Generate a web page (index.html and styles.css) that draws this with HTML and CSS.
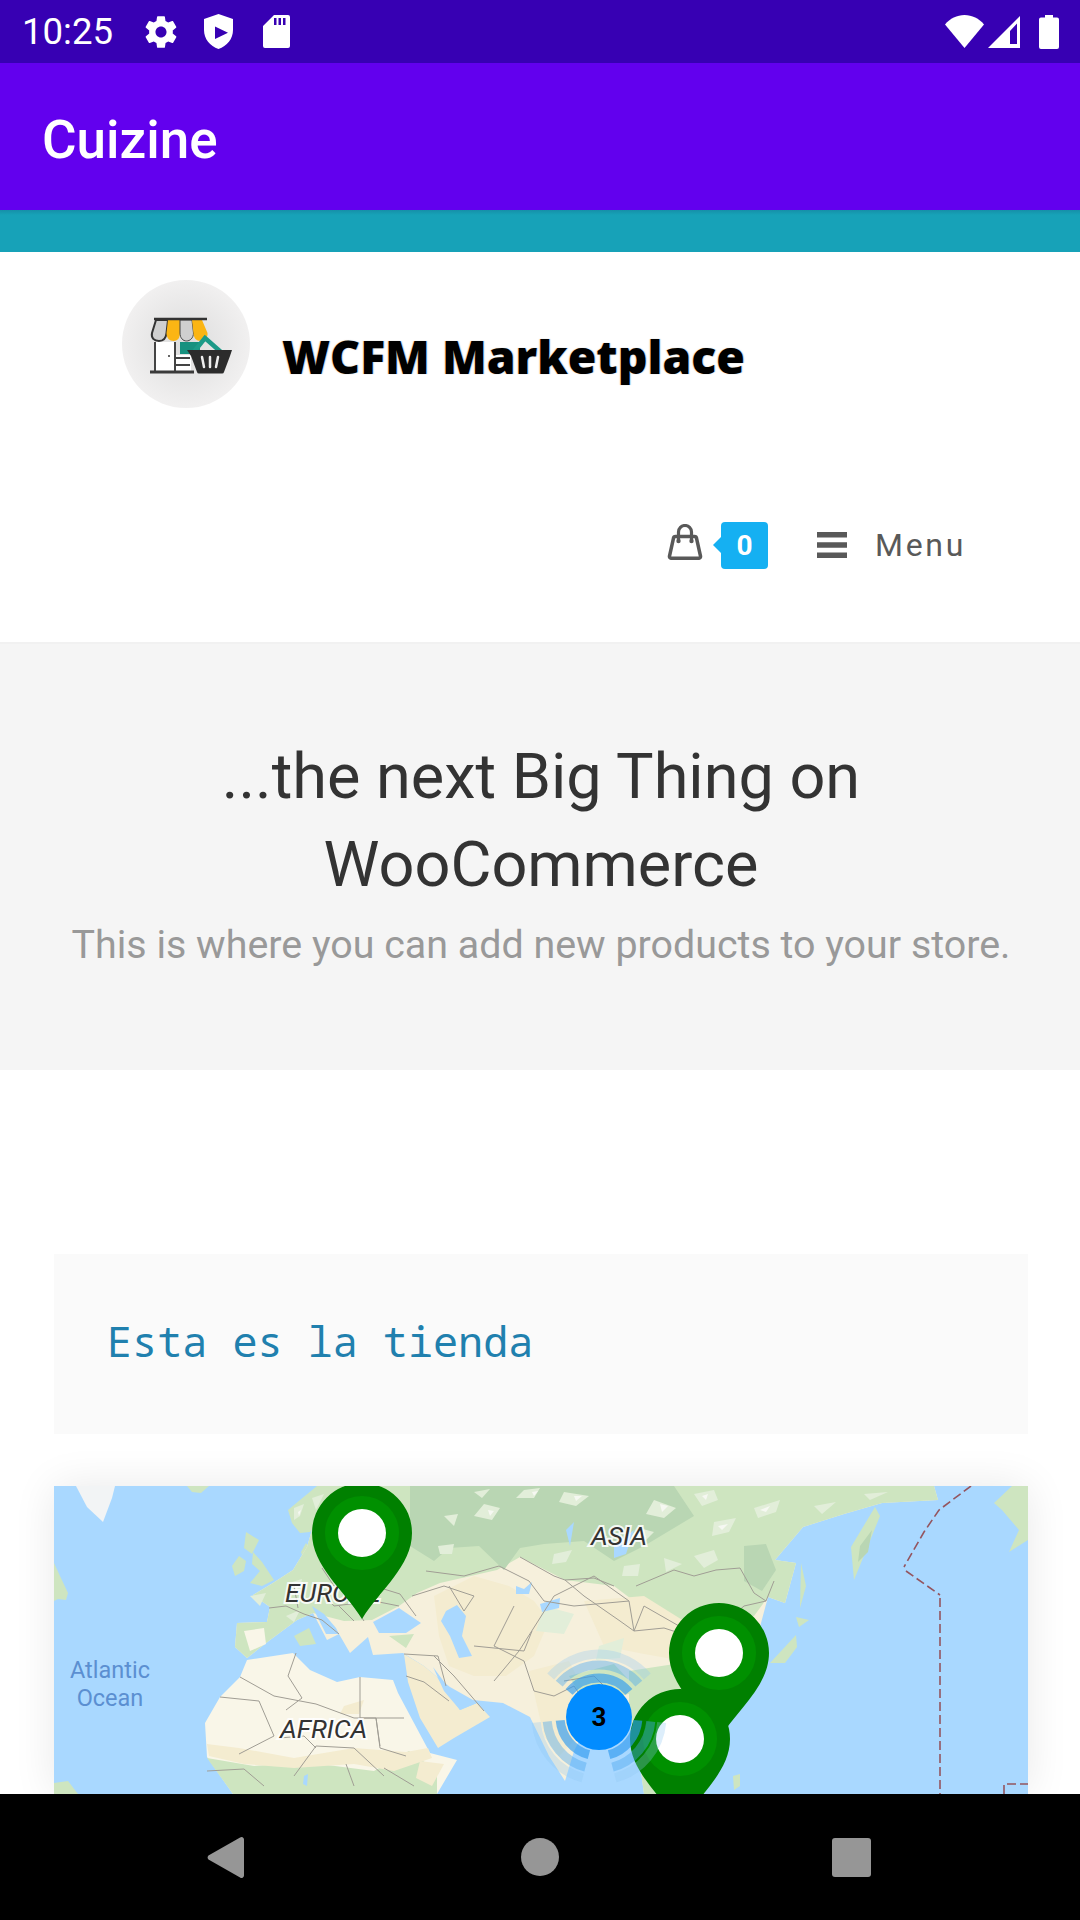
FILE: index.html
```html
<!DOCTYPE html>
<html lang="es">
<head>
<meta charset="utf-8">
<title>Cuizine</title>
<link rel="stylesheet" href="styles.css">
</head>
<body>
<div class="screen">
  <div class="status-bar">
    <span class="clock">10:25</span>
    <svg class="st-icon gear" viewBox="0 0 24 24"><path d="M19.4 13c.04-.33.07-.66.07-1s-.03-.67-.07-1l2.1-1.65c.2-.15.25-.42.12-.64l-2-3.46c-.12-.22-.39-.3-.61-.22l-2.49 1c-.52-.4-1.08-.73-1.69-.98l-.38-2.65A.49.49 0 0 0 14 2h-4c-.25 0-.46.18-.49.42l-.38 2.65c-.61.25-1.17.59-1.69.98l-2.49-1c-.23-.09-.49 0-.61.22l-2 3.46c-.13.22-.07.49.12.64L4.570 11c-.04.33-.07.67-.07 1s.03.67.07 1l-2.11 1.65c-.19.15-.24.42-.12.64l2 3.46c.12.22.39.3.61.22l2.49-1c.52.4 1.08.73 1.69.98l.38 2.65c.03.24.24.42.49.42h4c.25 0 .46-.18.49-.42l.38-2.65c.61-.25 1.17-.59 1.69-.98l2.49 1c.23.09.49 0 .61-.22l2-3.46c.12-.22.07-.49-.12-.64L19.4 13zM12 15.500c-1.93 0-3.500-1.570-3.500-3.500s1.570-3.500 3.500-3.500 3.500 1.570 3.500 3.500-1.570 3.500-3.500 3.500z"/></svg>
    <svg class="st-icon shield" viewBox="0 0 29 35"><path fill-rule="evenodd" d="M14.500 0 0 5v11c0 9 6 16 14.500 19C23 32 29 25 29 16V5L14.500 0zM11 12.500V25l13-6.200L11 12.500z"/></svg>
    <svg class="st-icon sd" viewBox="0 0 27 33"><path fill-rule="evenodd" d="M11 0h14a2 2 0 0 1 2 2v29a2 2 0 0 1-2 2H2a2 2 0 0 1-2-2V11L11 0zM11 3v7h2.500V3H11zm4.500 0v7H18V3h-2.500zm4.500 0v7h2.500V3H20z"/></svg>
    <span class="spacer"></span>
    <svg class="wifi" viewBox="0 0 39 33"><path d="M19.500 33 0 9.500C5 3.500 12 0 19.500 0S34 3.500 39 9.500L19.500 33z"/></svg>
    <svg class="signal" viewBox="0 0 32 32"><path fill-rule="evenodd" d="M32 0v32H0L32 0zM29 7.500l-7 7.500v13h7V7.500z"/></svg>
    <svg class="battery" viewBox="0 0 20 34"><path d="M6 0h8v2.500h4a2 2 0 0 1 2 2V32a2 2 0 0 1-2 2H2a2 2 0 0 1-2-2V4.500a2 2 0 0 1 2-2h4V0z"/></svg>
  </div>

  <header class="app-bar"><span class="app-title">Cuizine</span></header>
  <div class="teal-band"></div>

  <section class="site-header">
    <div class="logo-row">
      <svg class="logo-mark" viewBox="0 0 128 128">
        <defs>
          <radialGradient id="disc" cx="50%" cy="50%" r="50%">
            <stop offset="0" stop-color="#dcdcdc"/>
            <stop offset="1" stop-color="#f1f0f0"/>
          </radialGradient>
        </defs>
        <circle cx="64" cy="64" r="64" fill="url(#disc)"/>
        <g class="logo-art">
          <rect x="58" y="62" width="20" height="12" fill="#17917f"/>
          <rect x="33" y="62" width="20" height="29" fill="#fff"/>
          <rect x="53" y="75" width="16" height="16" fill="#fff"/>
          <path d="M33 62v30M53 62v30M54 78h14M54 85h14" stroke="#444" stroke-width="2" fill="none"/>
          <circle cx="47" cy="76" r="1" fill="#333"/>
          <path d="M28 92h44" stroke="#3a3a3a" stroke-width="3"/>
          <path d="M34 40 30 53c-1 5 2 8 7 8s7-3 7.500-8L46 40z" fill="#cfcfcf" stroke="#333" stroke-width="2"/>
          <path d="M46 40 44.500 53c0 5 3 8 7 8s6.500-3 6.500-8l0-13z" fill="#fbb514"/>
          <path d="M58 40v13c0 5 3 8 6.500 8s7-3 7-8L70 40z" fill="#cfcfcf" stroke="#444" stroke-width="1"/>
          <path d="M70 40 71.500 53c0 5 3 8 7 8s7.500-3 7-8L80 40z" fill="#fbb514"/>
          <path d="M32 39h53" stroke="#333" stroke-width="2.500"/>
          <path d="M71 73 83 58l17 15" fill="none" stroke="#1c9a88" stroke-width="4.500" stroke-linecap="round"/>
          <path d="M65 70h45l-2 6-6 16a2 2 0 0 1-2 1.500H77a2 2 0 0 1-2-1.500L69 76z" fill="#2c2c2c"/>
          <path d="M80 77l2 10M88 77v10M96 77l-2 10" stroke="#eee" stroke-width="2.500" stroke-linecap="round"/>
        </g>
      </svg>
      <span class="logo-text">WCFM Marketplace</span>
    </div>
    <div class="nav-row">
      <svg class="bag" viewBox="0 0 36 36"><path d="M8.500 12.500h19a2 2 0 0 1 2 1.700L33.500 32c.2 1.300-.5 2.300-2 2.300H4.500c-1.500 0-2.200-1-2-2.300l4-17.800a2 2 0 0 1 2-1.700z" fill="none" stroke="#595959" stroke-width="3.500"/><path d="M11.500 16V8a6.500 6.500 0 0 1 13 0v8" fill="none" stroke="#595959" stroke-width="3.200"/><circle cx="11.500" cy="17" r="2.200" fill="#595959"/><circle cx="24.500" cy="17" r="2.200" fill="#595959"/></svg>
      <span class="cart-badge">0</span>
      <svg class="burger" viewBox="0 0 30 26"><path d="M0 0h30v5.500H0zM0 10.250h30v5.500H0zM0 20.500h30V26H0z"/></svg>
      <span class="menu-label">Menu</span>
    </div>
  </section>

  <section class="page-title">
    <h1>...the next Big Thing on<br>WooCommerce</h1>
    <p>This is where you can add new products to your store.</p>
  </section>

  <main class="content">
    <div class="store-note"><span>Esta es la tienda</span></div>
    <div class="map">
      <svg class="map-svg" viewBox="0 0 974 308" preserveAspectRatio="none">
        <rect class="water" width="974" height="308"/>
        <g class="terrain">
          <path class="ice" d="M22 0H61L58 12 49 36 33 21z"/>
          <path class="green" d="M133 0H155L147 7 138 6z"/>
          <path class="green" d="M0 77 6 90 14 107 12 114 4 113 0 115z"/>
          <path class="green" d="M0 297 14 295 24 308H0z"/>
          <path class="green" d="M192 46 205 54 198 68 190 62z"/>
          <path class="green" d="M185 70 192 75 190 85 181 90 178 80z"/>
          <path class="green" d="M199 66 208 76 220 94 208 100 196 97 206 85 198 78z"/>
          <path class="green" d="M263 0H300L285 10 270 30 256 46 246 47 238 37 234 24 246 14z"/>
          <path class="pale" d="M240 22 250 18 246 30 240 34zM258 12 270 8 262 24z"/>
          <path class="green" d="M252 57 260 70 250 76 247 66z"/>

          <path class="beige" d="M290 0H880L884 14 828 17 790 28 749 41 721 74 742 77 731 117 714 111 707 137 700 170 670 230 650 308H590L585 270 575 225 550 215 535 235 520 265 511 295 495 270 476 231 449 217 419 214 396 201 383 191 370 180 349 167 319 169 314 151 296 167 285 148 273 154 259 127 243 134 216 154 193 172 181 161 183 137 213 136 216 121 199 109 219 97 239 84 253 61 262 30z"/>
          <path class="green" d="M290 0H880L884 14 828 17 790 28 749 41 721 74 742 77 731 117 714 111 700 130 660 140 600 130 560 100 511 94 466 71 443 84 386 97 363 107 345 120 318 134 290 135 259 127 243 134 216 154 193 172 181 161 183 137 213 136 216 121 199 109 219 97 239 84 253 61 262 30z"/>
          <path class="dark" d="M356 0H620L640 30 590 60 560 75 530 55 490 58 466 62 450 84 425 60 395 62 380 75 356 60z"/>
          <path class="dark" d="M690 60 712 58 722 84 708 105 690 95z"/>
          <path class="pale" d="M470 4 486 2 480 12 462 12zM510 6 535 10 522 20 505 16zM600 14 622 22 610 32 592 28zM640 8 660 4 664 14 648 20zM430 18 446 22 438 34 420 30zM585 42 600 46 590 56 575 52zM384 60 400 58 398 68 386 68zM500 68 518 64 512 76 498 78zM700 22 726 14 722 26 704 32zM660 36 682 32 675 46 658 50zM640 70 660 64 664 74 650 82zM610 72 628 78 612 86zM570 80 586 78 584 90 568 90zM760 20 782 16 768 28zM810 8 834 6 816 14zM420 6 436 3 428 12zM390 30 404 28 400 40zM196 110 212 107 206 120zM238 96 248 93 245 108 234 110zM270 100 282 97 278 110zM232 130 246 124 240 136z"/>
          <path class="bright" d="M478 6 484 5 480 10zM520 10 528 10 522 15zM606 18 614 20 608 26zM648 10 654 8 652 14zM434 24 440 25 436 30zM706 24 716 20 712 26zM664 40 674 38 668 44zM580 47 590 48 584 52zM244 26 247 24 245 30zM240 100 245 98 243 104z"/>
          <path class="tan" d="M380 110 420 90 455 100 480 115 495 135 480 170 452 190 420 190 395 180 385 150z"/>
          <path class="tan" d="M530 115 590 110 630 135 655 150 630 175 590 168 550 160z"/>
          <path class="tan" d="M475 185 515 175 530 205 520 255 505 270 490 250z"/>
          <path class="green" d="M575 185 640 175 690 150 700 170 670 230 650 308H590L585 270 575 225z"/>
          <path class="green" d="M515 190 560 178 585 205 560 212 530 215z"/>
          <path class="pale" d="M490 120 520 128 510 148 482 145zM545 160 570 152 566 172 542 174z"/>
          <path class="green" d="M240 150 255 142 262 158 246 160zM335 150 360 148 352 162z"/>
          <path class="cream" d="M190 145 210 142 212 158 196 165z"/>

          <path class="tan" d="M350 168 370 180 383 191 406 224 423 217 436 231 400 252 384 262 366 232 354 196z"/>
          <path class="water-fill" d="M319 136 345 122 367 137 352 147 325 147z"/>
          <path class="water-fill" d="M392 125 403 119 412 130 408 150 418 170 405 172 396 150 387 135z"/>
          <path class="water-fill" d="M462 100 470 103 478 96 475 108 462 108zM486 118 506 112 505 122 488 126z"/>
          <path class="water-fill" d="M379 181 394 201 399 211 423 217 406 224 390 205z"/>
          <path class="water-fill" d="M258 120 272 148 285 148 282 142 270 128z"/>
          <path class="water-fill" d="M560 60 580 44 572 68 560 72zM512 44 520 36 516 60z"/>
          <path class="cream" d="M193 174 239 167 256 184 283 196 306 191 339 194 344 207 376 267 403 274 383 308H179L153 271 151 237 166 211 186 191z"/>
          <path class="green" d="M153 272 200 280 250 276 320 285 355 265 383 285 383 308H179z"/>
          <path class="tan" d="M153 258 185 262 240 272 300 262 352 266 374 262 378 272 340 285 300 278 240 282 190 278 155 270z"/>
          <path class="tan" d="M290 220 310 214 305 228 286 228zM366 275 390 278 378 300 362 292z"/>
          <path class="water-fill" d="M250 290 254 288 253 300 249 298z"/>
          <path class="green" d="M716 177 742 149 743 161 731 177z"/>
          <path class="green" d="M742 131 755 134 745 141z"/>
          <path class="green" d="M747 77 752 100 746 122z"/>
          <path class="green" d="M797 61 821 21 826 30 800 94z"/>
          <path class="dark" d="M806 60 818 44 814 66 804 76z"/>
          <path class="green" d="M679 290 686 288 686 300 680 304z"/>
          <path class="green" d="M940 17 958 0H974V54L955 66 965 44 948 24z"/>
        </g>
        <g class="borders">
          <path d="M186 191 220 210 262 218 300 232 322 232 326 260M242 167 234 190 248 212 232 224M306 191 306 232 350 232M322 232 326 262 352 270M166 211 205 215 220 250 185 268M153 285 190 283 210 300M240 290 262 260 300 262 330 290M225 252 250 250 262 262M292 278 300 300M330 282 360 300"/>
          <path d="M215 122 232 120 250 128 268 134 285 148M240 100 244 122M262 100 280 120 320 115 345 120M268 82 280 100 320 100 346 108 362 130M285 120 300 135M300 120 310 135"/>
          <path d="M358 110 390 100 420 110 410 125M372 85 410 90 445 80 475 95 490 115 520 120 575 115 580 145 610 142 650 155 690 120 712 115 720 95M575 115 540 90 500 110 465 165 440 195M460 120 440 160 470 175 480 205 500 210 520 200 540 230M420 160 470 165 478 145M380 170 400 190 430 225M395 100 410 125M510 195 540 190 565 215M350 168 384 170 392 200M352 190 370 196 395 215"/>
          <path d="M582 100 620 84 640 90 662 84 686 82 700 107 712 115M466 71 500 90 511 94 540 92 560 100"/>
          <path d="M511 94 530 110 566 135 580 145 590 120 625 140 664 140"/>
        </g>
        <path class="dateline" d="M917 0 885 24 870 46 850 81"/>
        <path class="dateline" d="M852 85 886 109"/>
        <path class="dateline" d="M886 112V308"/>
        <path class="dateline" d="M950 308V298H974"/>

        <text class="continent" x="231" y="116">EUROPE</text>
        <text class="continent" x="226" y="252">AFRICA</text>
        <text class="continent" x="537" y="59">ASIA</text>

        <g class="pin">
          <path class="pin-body" d="M308 133C290 104 258 80 258 47a50 50 0 0 1 100 0c0 33-32 57-50 86z"/>
          <circle class="pin-ring" cx="308" cy="47" r="37"/>
          <circle class="pin-dot" cx="308" cy="47" r="24"/>
        </g>
        <g class="pin">
          <path class="pin-body" d="M665 253C647 224 615 200 615 167a50 50 0 0 1 100 0c0 33-32 57-50 86z"/>
          <circle class="pin-ring" cx="665" cy="167" r="37"/>
          <circle class="pin-dot" cx="665" cy="167" r="24"/>
        </g>
        <g class="pin">
          <path class="pin-body" d="M626 339C608 310 576 286 576 253a50 50 0 0 1 100 0c0 33-32 57-50 86z"/>
          <circle class="pin-ring" cx="626" cy="253" r="37"/>
          <circle class="pin-dot" cx="626" cy="253" r="24"/>
        </g>

        <g class="cluster" fill="none">
          <path class="arc a1" d="M515.100 205.900A39 39 0 0 1 574.900 205.900"/>
          <path class="arc a1" d="M583.800 234.400A39 39 0 0 1 555.100 268.700"/>
          <path class="arc a1" d="M534.900 268.700A39 39 0 0 1 506.200 234.400"/>
          <path class="arc a2" d="M505.200 197.600A52 52 0 0 1 584.800 197.600"/>
          <path class="arc a2" d="M596.800 235.500A52 52 0 0 1 558.500 281.200"/>
          <path class="arc a2" d="M531.500 281.200A52 52 0 0 1 493.200 235.500"/>
          <path class="arc a3" d="M496.700 190.500A63 63 0 0 1 593.300 190.500"/>
          <path class="arc a3" d="M607.700 236.500A63 63 0 0 1 561.300 291.900"/>
          <path class="arc a3" d="M528.700 291.900A63 63 0 0 1 482.300 236.500"/>
        </g>
        <circle class="cluster-core" cx="545" cy="231" r="33"/>
        <text class="cluster-num" x="545" y="240">3</text>
      </svg>
      <div class="ocean-label">Atlantic<br>Ocean</div>
    </div>
  </main>

  <nav class="nav-bar">
    <svg class="nav-icon nav-back" viewBox="0 0 38 44"><path d="M34 1.500a2.500 2.500 0 0 1 4 2v37a2.500 2.500 0 0 1-4 2L1.500 24a3 3 0 0 1 0-4z"/></svg>
    <span class="nav-home"></span>
    <span class="nav-recent"></span>
  </nav>
</div>
</body>
</html>
```

FILE: styles.css
```css
* { box-sizing: border-box; }
html, body { margin: 0; padding: 0; background: #fff; }
.screen {
  width: 1080px;
  height: 1920px;
  display: flex;
  flex-direction: column;
  overflow: hidden;
  font-family: Roboto, "Liberation Sans", sans-serif;
}

.status-bar {
  height: 63px;
  flex: none;
  background: #3700b3;
  display: flex;
  align-items: center;
  padding: 0 21px 0 22px;
  color: #fff;
}
.clock { font-size: 36.600px; width: 120px; }
.st-icon { fill: #fff; display: block; }
.gear { width: 38px; height: 38px; }
.shield { width: 29px; height: 35px; margin-left: 24px; }
.sd { width: 27px; height: 33px; margin-left: 30px; }
.spacer { flex: 1; }
.wifi { width: 39px; height: 33px; fill: #fff; margin-right: 4px; }
.signal { width: 32px; height: 32px; fill: #fff; margin-right: 19px; }
.battery { width: 20px; height: 34px; fill: #fff; }

.app-bar {
  height: 147px;
  flex: none;
  background: #6200ee;
  display: flex;
  align-items: center;
  padding: 6px 0 0 42px;
}
.app-title { color: #fff; font-size: 53px; font-weight: 500; }
.teal-band {
  height: 42px;
  flex: none;
  background: linear-gradient(#1590a8 0, #17a2b8 5px);
}

.site-header {
  height: 392px;
  flex: none;
  background: #fff;
  border-bottom: 2px solid #f1f1f1;
  display: flex;
  flex-direction: column;
}
.logo-row {
  display: flex;
  align-items: flex-start;
  padding: 28px 0 0 122px;
  height: 269px;
}
.logo-mark { width: 128px; height: 128px; flex: none; }
.logo-art { filter: blur(.4px); }
.logo-text {
  font-family: "Open Sans", "Noto Sans", sans-serif;
  font-weight: 800;
  font-size: 46.300px;
  line-height: 64px;
  color: #000;
  margin: 45px 0 0 32px;
  white-space: nowrap;
  text-shadow: -1px 0 1px rgba(240,140,0,.35), 1px 0 1px rgba(0,120,220,.35);
}
.nav-row {
  display: flex;
  align-items: center;
  height: 48px;
  padding-left: 667px;
}
.bag { width: 36px; height: 36px; margin-top: -6px; }
.cart-badge {
  position: relative;
  width: 47px;
  height: 47px;
  margin-left: 18px;
  background: #15b0f2;
  border-radius: 4px;
  color: #fff;
  font-size: 28px;
  font-weight: 700;
  display: flex;
  align-items: center;
  justify-content: center;
}
.cart-badge::before {
  content: "";
  position: absolute;
  left: -8px;
  top: 15px;
  border-style: solid;
  border-width: 8px 8px 8px 0;
  border-color: transparent #15b0f2 transparent transparent;
}
.burger { width: 30px; height: 26px; fill: #595959; margin-left: 49px; }
.menu-label {
  font-size: 32px;
  color: #595959;
  letter-spacing: 2.700px;
  margin-left: 28px;
}

.page-title {
  height: 426px;
  flex: none;
  background: #f5f5f5;
  text-align: center;
  padding: 89px 0 0 2px;
}
.page-title h1 {
  margin: 0;
  font-size: 63px;
  line-height: 88px;
  font-weight: 400;
  color: #333;
}
.page-title p {
  margin: 11px 0 0;
  font-size: 39.400px;
  line-height: 50px;
  color: #999;
}

.content {
  flex: 1;
  min-height: 0;
  padding: 184px 52px 0 54px;
  overflow: hidden;
  background: #fff;
}
.store-note {
  height: 180px;
  background: #fafafa;
  display: flex;
  align-items: center;
  padding: 0 0 8px 53px;
}
.store-note span {
  font-family: "Noto Sans Mono", "DejaVu Sans Mono", monospace;
  font-size: 41.800px;
  color: #2080ae;
}
.map {
  position: relative;
  margin-top: 52px;
  height: 308px;
  box-shadow: 0 0 40px rgba(0,0,0,.09);
}
.map-svg { display: block; width: 100%; height: 308px; overflow: hidden; }
.water { fill: #a9d8ff; }
.terrain { filter: blur(.6px); }
.ice { fill: #f2f4f5; }
.green { fill: #cee5c0; }
.dark { fill: #b9d6b3; }
.pale { fill: #e2eed9; }
.bright { fill: #f6f8f2; }
.beige { fill: #f6f0dc; }
.cream { fill: #f9f6e8; }
.tan { fill: #f4ecd0; }
.water-fill { fill: #a9d8ff; }
.borders { fill: none; stroke: #a09d94; stroke-width: 1; filter: blur(.3px); }
.dateline { fill: none; stroke: #94555f; stroke-width: 1.600; stroke-dasharray: 9 4; }
.continent {
  font-family: Roboto, sans-serif;
  font-style: italic;
  font-size: 26.500px;
  fill: #333;
  stroke: #fff;
  stroke-width: 4px;
  paint-order: stroke;
  stroke-opacity: .85;
}
.ocean-label {
  position: absolute;
  left: 0;
  top: 170px;
  width: 112px;
  text-align: center;
  font-size: 23.500px;
  line-height: 28px;
  color: #5b8fd1;
}
.pin-body { fill: #008000; }
.pin-ring { fill: #009000; }
.pin-dot { fill: #fff; }
.arc { stroke-linecap: butt; }
.a1 { stroke: #2f9bf0; stroke-width: 9px; opacity: .65; }
.a2 { stroke: #4aa6ee; stroke-width: 9px; opacity: .42; }
.a3 { stroke: #8ec8f2; stroke-width: 9px; opacity: .3; }
.cluster-core { fill: #028cff; }
.cluster-num {
  font-family: Roboto, sans-serif;
  font-weight: 700;
  font-size: 26px;
  fill: #000;
  text-anchor: middle;
}

.nav-bar {
  height: 126px;
  flex: none;
  background: #000;
  display: flex;
  align-items: center;
  padding: 0 0 0 207px;
}
.nav-icon { fill: #969696; }
.nav-back { width: 37px; height: 43px; }
.nav-home {
  width: 38px;
  height: 38px;
  border-radius: 50%;
  background: #969696;
  margin-left: 277px;
}
.nav-recent {
  width: 39px;
  height: 39px;
  border-radius: 3px;
  background: #969696;
  margin-left: 273px;
}
```
